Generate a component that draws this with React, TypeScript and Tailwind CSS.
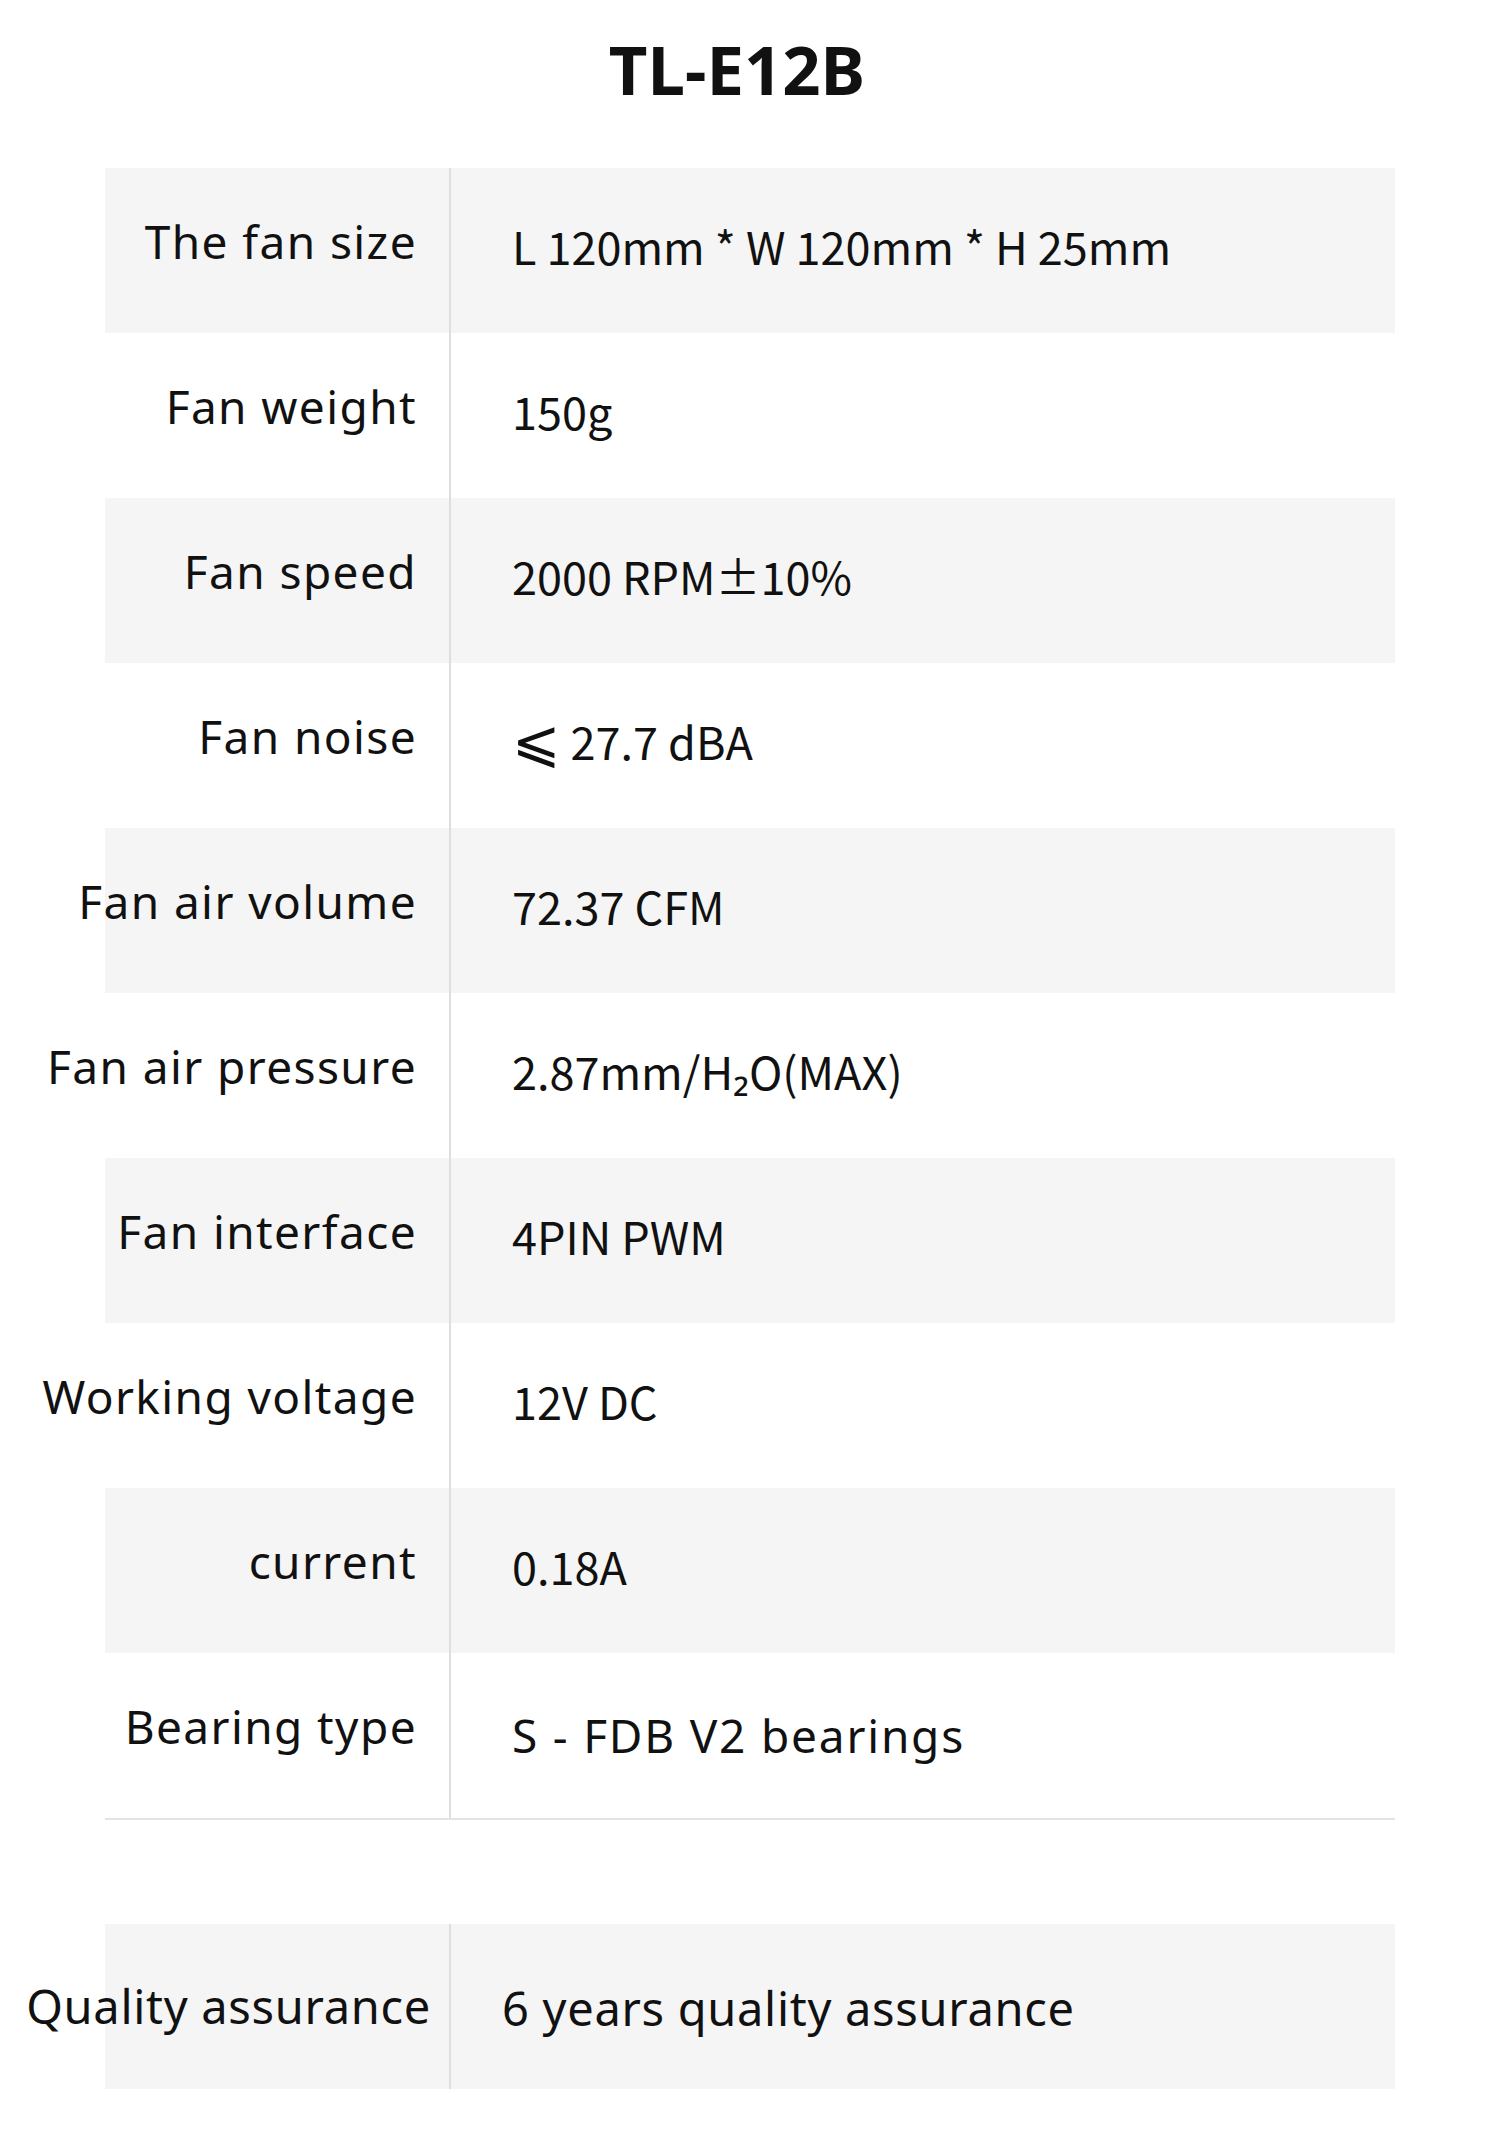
import type { ReactNode } from "react";

const labelFont = "font-['Noto_Sans',sans-serif]";
const valueFont = "font-['Noto_Sans_CJK_SC','Noto_Sans',sans-serif]";

const specs: { label: string; value: ReactNode; latin?: boolean }[] = [
  { label: "The fan size", value: "L 120mm * W 120mm * H 25mm" },
  { label: "Fan weight", value: "150g" },
  { label: "Fan speed", value: "2000 RPM±10%" },
  {
    label: "Fan noise",
    value: (
      <>
        <span className="mr-[10px] font-['DejaVu_Sans',sans-serif] text-[58px] leading-none">⩽</span>
        27.7 dBA
      </>
    ),
  },
  { label: "Fan air volume", value: "72.37 CFM" },
  { label: "Fan air pressure", value: "2.87mm/H₂O(MAX)" },
  { label: "Fan interface", value: "4PIN PWM" },
  { label: "Working voltage", value: "12V DC" },
  { label: "current", value: "0.18A" },
  { label: "Bearing type", value: "S - FDB V2 bearings", latin: true },
];

export default function App() {
  return (
    <div className="min-h-[2141px] w-[1500px] bg-white text-[#111]">
      <h1 className={`${labelFont} flex h-[168px] justify-center pt-[24px] pr-[26px] text-[67px] font-bold leading-[90px]`}>
        TL-E12B
      </h1>

      <div className="mx-auto w-[1290px] border-b-2 border-[#e4e4e4]">
        {specs.map((row, i) => (
          <div key={row.label} className={`flex h-[165px] ${i % 2 === 0 ? "bg-[#f5f5f5]" : "bg-white"}`}>
            <div
              className={`${labelFont} flex w-[346px] shrink-0 items-center justify-end border-r-2 border-[#dedede] pr-[32px] pb-[18px] text-[46px] tracking-[1.4px] whitespace-nowrap`}
            >
              {row.label}
            </div>
            <div
              className={
                row.latin
                  ? `${labelFont} flex items-center pl-[61px] text-[46px] tracking-[1.8px] whitespace-nowrap`
                  : `${valueFont} flex items-center pl-[61px] pb-[10px] text-[45px] whitespace-nowrap`
              }
            >
              {row.value}
            </div>
          </div>
        ))}
      </div>

      <div className="mx-auto mt-[104px] flex h-[165px] w-[1290px] bg-[#f5f5f5]">
        <div
          className={`${labelFont} flex w-[346px] shrink-0 items-center justify-end border-r-2 border-[#dedede] pr-[18px] text-[47px] tracking-[0.7px] whitespace-nowrap`}
        >
          Quality assurance
        </div>
        <div className={`${labelFont} flex items-center pl-[51px] pt-[4px] text-[47px] tracking-[0.7px] whitespace-nowrap`}>
          6 years quality assurance
        </div>
      </div>
    </div>
  );
}
